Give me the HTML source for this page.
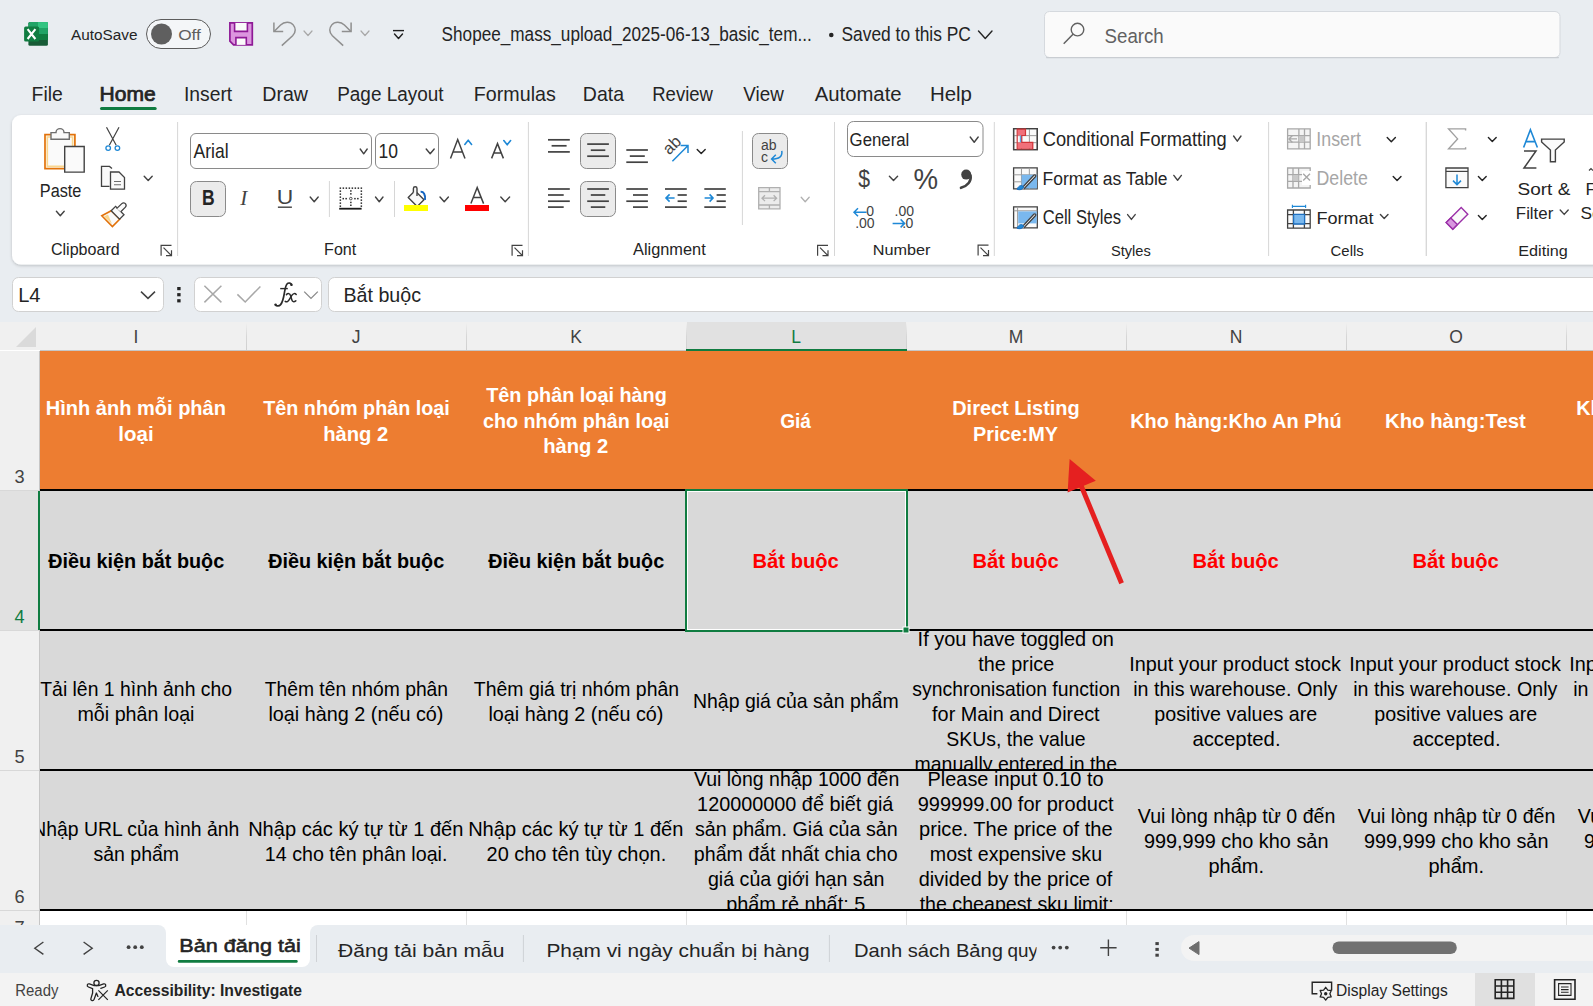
<!DOCTYPE html>
<html><head><meta charset="utf-8"><title>Excel</title>
<style>html,body{margin:0;padding:0;width:1593px;height:1006px;overflow:hidden;background:#e9edf1;}
svg{display:block;font-family:"Liberation Sans", sans-serif;}</style></head>
<body><svg width="1593" height="1006" viewBox="0 0 1593 1006"><rect x="0" y="0" width="1593" height="1006" fill="#e9edf1" /><defs><filter id="sh" x="-5%" y="-20%" width="110%" height="140%"><feDropShadow dx="0" dy="1.2" stdDeviation="1.8" flood-color="#000" flood-opacity="0.2"/></filter><clipPath id="gridclip"><rect x="40" y="351" width="1553" height="574"/></clipPath><clipPath id="gridclip2"><rect x="0" y="351" width="40" height="574"/></clipPath><linearGradient id="hsep" x1="0" y1="0" x2="0" y2="1"><stop offset="0" stop-color="#f0f0f0"/><stop offset="0.5" stop-color="#d6d6d6"/><stop offset="1" stop-color="#d0d0d0"/></linearGradient></defs><rect x="12" y="115" width="1620" height="149.6" rx="9" fill="#fff" filter="url(#sh)"/><rect x="28.4" y="22.1" width="19.5" height="23.6" fill="#185c37" rx="1.5"/><rect x="28.4" y="22.1" width="19.5" height="6" fill="#21a366" rx="1.5"/><rect x="38" y="22.1" width="9.9" height="6" fill="#33c481" /><rect x="28.4" y="28" width="19.5" height="6" fill="#21a366" /><rect x="28.4" y="34" width="19.5" height="6" fill="#107c41" /><rect x="24.1" y="26.4" width="15" height="15" fill="#107c41" rx="1.5"/><path d="M27.6 29.2 L35.4 39 M35.4 29.2 L27.6 39" fill="none" stroke="#fff" stroke-width="2.1" /><text transform="translate(71.00,39.70) scale(1.0185,1)" font-size="15.07" font-weight="400" fill="#242424">AutoSave</text><rect x="146.5" y="19.5" width="64" height="29" rx="14.5" fill="#f4f6f8" stroke="#5c5c5c" stroke-width="1"/><circle cx="161.5" cy="34" r="10.5" fill="#5f5f5f"/><text transform="translate(178.20,39.70) scale(1.1458,1)" font-size="15.07" font-weight="400" fill="#5f5f5f">Off</text><path d="M229.9 22.9 H252.3 V44.9 H233.6 L229.9 41.2 Z" fill="#dc96df" stroke="#8e1a96" stroke-width="1.7" /><path d="M234.6 22.9 V31.4 H247.4 V22.9" fill="#fafafa" stroke="#8e1a96" stroke-width="1.6" /><path d="M235.9 44.9 V37.6 H246.3 V44.9" fill="#fafafa" stroke="#8e1a96" stroke-width="1.6" /><path d="M273.9 22.4 V31.6 H283.2" fill="none" stroke="#8f8f8f" stroke-width="1.5" /><path d="M274.3 31.3 L280.6 25 C284.2 21.4 290.2 21.2 293.2 24.9 C296.2 28.6 295.6 32.6 292.6 35.8 L281.8 45.6" fill="none" stroke="#8f8f8f" stroke-width="1.5" /><path d="M304 31 L308.0 35.5 L312 31" fill="none" stroke="#a8a8a8" stroke-width="1.2" stroke-linecap="round" stroke-linejoin="round"/><path d="M351.1 22.4 V31.6 H341.8" fill="none" stroke="#8f8f8f" stroke-width="1.5" /><path d="M350.7 31.3 L344.4 25 C340.8 21.4 334.8 21.2 331.8 24.9 C328.8 28.6 329.4 32.6 332.4 35.8 L343.2 45.6" fill="none" stroke="#8f8f8f" stroke-width="1.5" /><path d="M361 31 L365.0 35.5 L369 31" fill="none" stroke="#a8a8a8" stroke-width="1.2" stroke-linecap="round" stroke-linejoin="round"/><path d="M393 30.6 H404" fill="none" stroke="#1f1f1f" stroke-width="1.4" /><path d="M394.5 34 L398.5 38.5 L402.5 34" fill="none" stroke="#1f1f1f" stroke-width="1.4" stroke-linecap="round" stroke-linejoin="round"/><text transform="translate(441.60,41.00) scale(0.8900,1)" font-size="19.28" font-weight="400" fill="#242424">Shopee_mass_upload_2025-06-13_basic_tem...</text><circle cx="831.3" cy="35" r="2.3" fill="#242424"/><text transform="translate(841.49,41.00) scale(0.9015,1)" font-size="19.28" font-weight="400" fill="#242424">Saved to this PC</text><path d="M978.5 31 L985.25 38.5 L992 31" fill="none" stroke="#242424" stroke-width="1.4" stroke-linecap="round" stroke-linejoin="round"/><rect x="1044.5" y="11.5" width="515.5" height="46" rx="5" fill="#fafafa" stroke="#d5d9de" stroke-width="1"/><rect x="1046" y="57" width="513" height="1.2" fill="#c9cdd2" rx="0.6"/><circle cx="1077.5" cy="29.6" r="6.3" fill="none" stroke="#616161" stroke-width="1.4"/><path d="M1073 34.3 L1063.7 43.8" fill="none" stroke="#616161" stroke-width="1.5" /><text transform="translate(1104.55,42.80) scale(0.9409,1)" font-size="19.86" font-weight="400" fill="#616161">Search</text><text transform="translate(31.56,101.10) scale(0.9632,1)" font-size="20.14" font-weight="400" fill="#242424">File</text><text transform="translate(183.97,101.10) scale(0.9586,1)" font-size="20.14" font-weight="400" fill="#242424">Insert</text><text transform="translate(262.24,101.10) scale(0.9736,1)" font-size="20.14" font-weight="400" fill="#242424">Draw</text><text transform="translate(337.20,101.10) scale(0.9406,1)" font-size="20.14" font-weight="400" fill="#242424">Page Layout</text><text transform="translate(473.84,101.10) scale(0.9767,1)" font-size="20.14" font-weight="400" fill="#242424">Formulas</text><text transform="translate(582.85,101.10) scale(0.9682,1)" font-size="20.14" font-weight="400" fill="#242424">Data</text><text transform="translate(652.23,101.10) scale(0.9193,1)" font-size="20.14" font-weight="400" fill="#242424">Review</text><text transform="translate(743.31,101.10) scale(0.9352,1)" font-size="20.14" font-weight="400" fill="#242424">View</text><text transform="translate(814.70,101.10) scale(1.0082,1)" font-size="20.14" font-weight="400" fill="#242424">Automate</text><text transform="translate(929.88,101.10) scale(1.0154,1)" font-size="20.14" font-weight="400" fill="#242424">Help</text><text transform="translate(99.53,101.10) scale(1.0450,1)" font-size="20.14" font-weight="400" fill="#242424" stroke="#242424" stroke-width="0.75">Home</text><rect x="100" y="107" width="56.7" height="3" fill="#107c41" rx="1.5"/><path d="M45 134.6 H74.9 V168.7 H45 Z" fill="#fafafa" stroke="#e2720a" stroke-width="1.7" /><path d="M47.3 137 H72.6 V166.4 H47.3 Z" fill="none" stroke="#f9d68e" stroke-width="1.6" /><path d="M51 139.3 V132.6 H56 A4 4 0 0 1 64 132.6 H69.3 V139.3 Z" fill="#fafafa" stroke="#6e6e6e" stroke-width="1.4" /><path d="M64.7 146.5 H84.2 V172.1 H64.7 Z" fill="#fafafa" stroke="#424242" stroke-width="1.4" /><text transform="translate(39.81,196.50) scale(0.9211,1)" font-size="17.68" font-weight="400" fill="#242424">Paste</text><path d="M56.4 211.3 L60.3 215.8 L64.2 211.3" fill="none" stroke="#424242" stroke-width="1.4" stroke-linecap="round" stroke-linejoin="round"/><path d="M106.5 127.3 L116.2 145.2 M119 127.3 L109.3 145.2" fill="none" stroke="#424242" stroke-width="1.2" /><circle cx="108.2" cy="148.1" r="2.3" fill="#fff" stroke="#1e88d6" stroke-width="1.3"/><circle cx="117.4" cy="148.1" r="2.3" fill="#fff" stroke="#1e88d6" stroke-width="1.3"/><path d="M109.5 186.4 H101.5 V166.4 H109.5 L112 168.5" fill="#fafafa" stroke="#424242" stroke-width="1.3" /><path d="M110.5 172 H119 L124.5 177.5 V189.2 H110.5 Z" fill="#fafafa" stroke="#424242" stroke-width="1.3" /><path d="M114 181.5 H121 M114 184.8 H121" fill="none" stroke="#6e6e6e" stroke-width="1.1" /><path d="M144.2 176.3 L148.2 180.6 L152.2 176.3" fill="none" stroke="#424242" stroke-width="1.4" stroke-linecap="round" stroke-linejoin="round"/><path d="M101.8 215.8 L111.2 210.8 L119.6 219.2 L112.4 226.6 Z" fill="#fafafa" stroke="#e2720a" stroke-width="1.6" /><path d="M104 216.4 L108 214.4 L112 224 Z" fill="#f9d68e" stroke="none" stroke-width="0" /><path d="M111.2 210.8 L115.6 206.4 L124 214.8 L119.6 219.2 Z" fill="#fafafa" stroke="#424242" stroke-width="1.3" /><path d="M116.6 208.6 L121.8 203.6 C123 202.4 124.8 202.6 125.6 203.8 C126.4 205 126.2 206.4 125.2 207.4 L120.8 211.8" fill="#fafafa" stroke="#424242" stroke-width="1.3" /><text transform="translate(50.88,254.60) scale(1.0277,1)" font-size="15.65" font-weight="400" fill="#242424">Clipboard</text><path d="M161.1 255.7 V245.29999999999998 H171.5" fill="none" stroke="#424242" stroke-width="1.2" /><path d="M163.5 247.7 L171.5 255.7 M171.5 250.2 V255.7 H166.0" fill="none" stroke="#424242" stroke-width="1.2" /><rect x="177.1" y="122" width="1" height="134" fill="#d6d6d6" /><rect x="190.5" y="133.5" width="181" height="35" rx="5.5" fill="#fff" stroke="#8a8a8a" stroke-width="1"/><text transform="translate(193.60,158.10) scale(0.8760,1)" font-size="20.00" font-weight="400" fill="#242424">Arial</text><path d="M360.2 149 L363.7 153.8 L367.2 149" fill="none" stroke="#424242" stroke-width="1.4" stroke-linecap="round" stroke-linejoin="round"/><rect x="375.5" y="133.5" width="63" height="35" rx="5.5" fill="#fff" stroke="#8a8a8a" stroke-width="1"/><text transform="translate(378.49,158.10) scale(0.8750,1)" font-size="20.00" font-weight="400" fill="#242424">10</text><path d="M426.2 149 L430.2 153.8 L434.2 149" fill="none" stroke="#424242" stroke-width="1.4" stroke-linecap="round" stroke-linejoin="round"/><path d="M450.5 158.4 L457.7 139.6 L465 158.4 M453 152 H462.5" fill="none" stroke="#424242" stroke-width="1.5" /><path d="M464.8 144.4 L468.20000000000005 140.2 L471.6 144.4" fill="none" stroke="#1e88d6" stroke-width="1.6" stroke-linecap="round" stroke-linejoin="round"/><path d="M491.6 158.4 L497.5 143.6 L503.4 158.4 M493.6 153 H501.4" fill="none" stroke="#424242" stroke-width="1.5" /><path d="M503.8 140.6 L507.20000000000005 144.8 L510.6 140.6" fill="none" stroke="#1e88d6" stroke-width="1.6" stroke-linecap="round" stroke-linejoin="round"/><rect x="190.5" y="181.5" width="35" height="35" rx="6" fill="#ebebeb" stroke="#8a8a8a" stroke-width="1"/><text transform="translate(202.05,204.70) scale(0.8231,1)" font-size="21.30" font-weight="700" fill="#242424">B</text><text transform="translate(240.2,204.7) scale(1,1)" font-family="Liberation Serif" font-style="italic" font-size="21" fill="#424242">I</text><text transform="translate(276.84,204.40) scale(1.1017,1)" font-size="20.72" font-weight="400" fill="#424242">U</text><rect x="277.9" y="206.5" width="14" height="1.4" fill="#424242" /><path d="M310.2 197 L314.2 201.8 L318.2 197" fill="none" stroke="#424242" stroke-width="1.4" stroke-linecap="round" stroke-linejoin="round"/><rect x="328.9" y="181" width="1" height="36" fill="#d6d6d6" /><g fill="#2a2a2a"><rect x="339.6" y="187.4" width="1.5" height="1.5"/><rect x="342.6" y="187.4" width="1.5" height="1.5"/><rect x="345.6" y="187.4" width="1.5" height="1.5"/><rect x="348.6" y="187.4" width="1.5" height="1.5"/><rect x="351.6" y="187.4" width="1.5" height="1.5"/><rect x="354.6" y="187.4" width="1.5" height="1.5"/><rect x="357.6" y="187.4" width="1.5" height="1.5"/><rect x="360.6" y="187.4" width="1.5" height="1.5"/><rect x="339.6" y="190.4" width="1.5" height="1.5"/><rect x="360.6" y="190.4" width="1.5" height="1.5"/><rect x="339.6" y="193.4" width="1.5" height="1.5"/><rect x="360.6" y="193.4" width="1.5" height="1.5"/><rect x="339.6" y="196.4" width="1.5" height="1.5"/><rect x="360.6" y="196.4" width="1.5" height="1.5"/><rect x="339.6" y="199.4" width="1.5" height="1.5"/><rect x="360.6" y="199.4" width="1.5" height="1.5"/><rect x="339.6" y="202.4" width="1.5" height="1.5"/><rect x="360.6" y="202.4" width="1.5" height="1.5"/><rect x="339.6" y="205.4" width="1.5" height="1.5"/><rect x="360.6" y="205.4" width="1.5" height="1.5"/><rect x="350.1" y="190.2" width="1.5" height="1.5"/><rect x="350.1" y="193.1" width="1.5" height="1.5"/><rect x="350.1" y="201.7" width="1.5" height="1.5"/><rect x="350.1" y="204.5" width="1.5" height="1.5"/><rect x="342.5" y="197.9" width="1.5" height="1.5"/><rect x="345.4" y="197.9" width="1.5" height="1.5"/><rect x="354.2" y="197.9" width="1.5" height="1.5"/><rect x="357.1" y="197.9" width="1.5" height="1.5"/></g><circle cx="350.8" cy="198.6" r="1.3" fill="none" stroke="#2a2a2a" stroke-width="0.8"/><rect x="339.2" y="207.8" width="22.4" height="1.8" fill="#1a1a1a" /><path d="M375.5 197 L379.25 201.8 L383 197" fill="none" stroke="#424242" stroke-width="1.4" stroke-linecap="round" stroke-linejoin="round"/><rect x="394.0" y="181" width="1" height="36" fill="#d6d6d6" /><path d="M408.2 197.6 L415 190.8 L424 199.8 L417.2 206.6 Z" fill="#fafafa" stroke="#424242" stroke-width="1.4" stroke-linejoin="round"/><path d="M413.4 192.4 V188.4 C413.4 186.2 417 186.2 417 188.4 V196" fill="#fafafa" stroke="#424242" stroke-width="1.4" /><path d="M420.6 191.8 C423.6 191.6 425.6 194.6 425 199.8" fill="none" stroke="#1565c0" stroke-width="2" /><rect x="404" y="205" width="24" height="6" fill="#ffff00" /><path d="M440 197 L444.2 201.8 L448.4 197" fill="none" stroke="#424242" stroke-width="1.4" stroke-linecap="round" stroke-linejoin="round"/><path d="M470.9 203.6 L477.2 187.6 L483.6 203.6 M473.3 197.6 H481.1" fill="none" stroke="#424242" stroke-width="1.5" /><rect x="465" y="205" width="24" height="6" fill="#ff0000" /><path d="M500.8 197 L505.20000000000005 201.8 L509.6 197" fill="none" stroke="#424242" stroke-width="1.4" stroke-linecap="round" stroke-linejoin="round"/><text transform="translate(324.07,254.80) scale(1.0268,1)" font-size="15.65" font-weight="400" fill="#242424">Font</text><path d="M512.1 255.7 V245.29999999999998 H522.5" fill="none" stroke="#424242" stroke-width="1.2" /><path d="M514.5 247.7 L522.5 255.7 M522.5 250.2 V255.7 H517.0" fill="none" stroke="#424242" stroke-width="1.2" /><rect x="527.9" y="122" width="1" height="134" fill="#d6d6d6" /><rect x="548" y="138.95000000000002" width="21.799999999999955" height="1.7" fill="#424242" /><rect x="551.6" y="144.95000000000002" width="15.0" height="1.7" fill="#424242" /><rect x="548" y="151.05" width="21.799999999999955" height="1.7" fill="#424242" /><rect x="580.5" y="133.5" width="35" height="35" rx="6" fill="#ebebeb" stroke="#8a8a8a" stroke-width="1"/><rect x="587.2" y="143.25" width="21.699999999999932" height="1.7" fill="#424242" /><rect x="590.8" y="149.35" width="14.5" height="1.7" fill="#424242" /><rect x="587.2" y="155.35" width="21.699999999999932" height="1.7" fill="#424242" /><rect x="626.3" y="149.15" width="21.600000000000023" height="1.7" fill="#424242" /><rect x="629.8" y="155.25" width="15.0" height="1.7" fill="#424242" /><rect x="626.3" y="161.35" width="21.600000000000023" height="1.7" fill="#424242" /><text transform="translate(669.2,155.6) rotate(-45)" font-size="16.5" fill="#424242">ab</text><path d="M672.4 161.2 L687.6 146 M680.6 145.6 H688 V153" fill="none" stroke="#1e88d6" stroke-width="1.5" /><path d="M697.2 149.4 L701.2 153.6 L705.2 149.4" fill="none" stroke="#242424" stroke-width="1.4" stroke-linecap="round" stroke-linejoin="round"/><rect x="548" y="188.15" width="21.799999999999955" height="1.7" fill="#424242" /><rect x="548" y="194.15" width="15.700000000000045" height="1.7" fill="#424242" /><rect x="548" y="200.35" width="21.799999999999955" height="1.7" fill="#424242" /><rect x="548" y="206.25" width="15.700000000000045" height="1.7" fill="#424242" /><rect x="580.5" y="181.5" width="35" height="35" rx="6" fill="#ebebeb" stroke="#8a8a8a" stroke-width="1"/><rect x="587.2" y="188.15" width="21.699999999999932" height="1.7" fill="#424242" /><rect x="590.8" y="194.15" width="14.5" height="1.7" fill="#424242" /><rect x="587.2" y="200.35" width="21.699999999999932" height="1.7" fill="#424242" /><rect x="590.8" y="206.25" width="14.5" height="1.7" fill="#424242" /><rect x="626.3" y="188.15" width="21.600000000000023" height="1.7" fill="#424242" /><rect x="633" y="194.15" width="14.899999999999977" height="1.7" fill="#424242" /><rect x="626.3" y="200.35" width="21.600000000000023" height="1.7" fill="#424242" /><rect x="633" y="206.25" width="14.899999999999977" height="1.7" fill="#424242" /><rect x="665" y="188.15" width="21.799999999999955" height="1.7" fill="#424242" /><rect x="677.6" y="194.15" width="9.199999999999932" height="1.7" fill="#424242" /><rect x="677.6" y="200.35" width="9.199999999999932" height="1.7" fill="#424242" /><rect x="665" y="206.25" width="21.799999999999955" height="1.7" fill="#424242" /><path d="M674.6 198 H666 M669.6 194.4 L666 198 L669.6 201.6" fill="none" stroke="#1e88d6" stroke-width="1.6" /><rect x="704.3" y="188.15" width="21.5" height="1.7" fill="#424242" /><rect x="716.6" y="194.15" width="9.199999999999932" height="1.7" fill="#424242" /><rect x="716.6" y="200.35" width="9.199999999999932" height="1.7" fill="#424242" /><rect x="704.3" y="206.25" width="21.5" height="1.7" fill="#424242" /><path d="M704.6 198 H713 M709.6 194.4 L713 198 L709.6 201.6" fill="none" stroke="#1e88d6" stroke-width="1.6" /><rect x="741.9" y="131" width="1" height="94" fill="#d6d6d6" /><rect x="752.5" y="133.5" width="35" height="35" rx="6" fill="#ebebeb" stroke="#8a8a8a" stroke-width="1"/><text x="761" y="150.4" font-size="14" fill="#424242">ab</text><text x="761" y="161.8" font-size="14" fill="#424242">c</text><path d="M781.8 150.8 C782.6 156.6 779.2 159 771.8 159 M775.8 154.8 L771.6 159 L775.8 163.2" fill="none" stroke="#1e88d6" stroke-width="1.5" /><path d="M758.7 187.7 H780 V208.8 H758.7 Z M758.7 191.6 H780 M758.7 205 H780 M769.4 187.7 V191.6 M769.4 205 V208.8" fill="#ececec" stroke="#b0b0b0" stroke-width="1.3" /><path d="M762 198.2 H776.6 M765 195.3 L762 198.2 L765 201.1 M773.6 195.3 L776.6 198.2 L773.6 201.1" fill="none" stroke="#b0b0b0" stroke-width="1.3" /><path d="M801.2 197.2 L805.2 201.8 L809.2 197.2" fill="none" stroke="#b0b0b0" stroke-width="1.3" stroke-linecap="round" stroke-linejoin="round"/><text transform="translate(633.00,254.60) scale(1.0448,1)" font-size="15.65" font-weight="400" fill="#242424">Alignment</text><path d="M817.6 255.7 V245.29999999999998 H828" fill="none" stroke="#424242" stroke-width="1.2" /><path d="M820 247.7 L828 255.7 M828 250.2 V255.7 H822.5" fill="none" stroke="#424242" stroke-width="1.2" /><rect x="834.0" y="122" width="1" height="134" fill="#d6d6d6" /><rect x="847.5" y="121.5" width="135.5" height="35" rx="6" fill="#fff" stroke="#8a8a8a" stroke-width="1"/><text transform="translate(849.60,146.00) scale(0.8840,1)" font-size="18.99" font-weight="400" fill="#242424">General</text><path d="M970.2 137 L974.2 142.2 L978.2 137" fill="none" stroke="#424242" stroke-width="1.4" stroke-linecap="round" stroke-linejoin="round"/><text transform="translate(858.34,187.30) scale(0.8819,1)" font-size="24.06" font-weight="400" fill="#424242">$</text><path d="M889.4 176.2 L893.5 180.6 L897.6 176.2" fill="none" stroke="#424242" stroke-width="1.4" stroke-linecap="round" stroke-linejoin="round"/><text transform="translate(913.58,188.80) scale(0.9262,1)" font-size="29.86" font-weight="400" fill="#424242">%</text><circle cx="966.2" cy="174.6" r="5" fill="#424242"/><path d="M970.6 175.6 C971.4 181.5 967.4 186 961 187.8" fill="none" stroke="#424242" stroke-width="2.6" stroke-linecap="round"/><g font-size="14" fill="#424242"><text x="866.2" y="216.2">0</text><text x="855.2" y="227.6">.00</text><text x="894.6" y="216.2">.00</text><text x="905.4" y="227.6">0</text><text x="902.2" y="227.6">.</text></g><path d="M866.6 212.2 H854.2 M858 208.2 L854 212.2 L858 216.2" fill="none" stroke="#1e88d6" stroke-width="1.5" /><path d="M892.6 223.4 H904.4 M900.6 219.4 L904.6 223.4 L900.6 227.4" fill="none" stroke="#1e88d6" stroke-width="1.5" /><text transform="translate(872.72,254.90) scale(1.0684,1)" font-size="15.22" font-weight="400" fill="#242424">Number</text><path d="M978.1 255.6 V245.2 H988.5" fill="none" stroke="#424242" stroke-width="1.2" /><path d="M980.5 247.6 L988.5 255.6 M988.5 250.1 V255.6 H983.0" fill="none" stroke="#424242" stroke-width="1.2" /><rect x="993.8" y="122" width="1" height="134" fill="#d6d6d6" /><path d="M1013.6 128.6 H1037.3 V149.7 H1013.6 Z" fill="#fafafa" stroke="#424242" stroke-width="1.3" /><path d="M1013.6 135.63 H1037.3 M1013.6 142.67 H1037.3 M1021.50 128.6 V149.7 M1029.40 128.6 V149.7" fill="none" stroke="#9a9a9a" stroke-width="1" /><rect x="1017.6" y="129.2" width="8" height="6.3" fill="#f0707a" /><rect x="1017.6" y="142.4" width="15.4" height="6.3" fill="#f0707a" /><rect x="1019.8" y="135.6" width="2.2" height="6.6" fill="#5aa9e6" /><path d="M1013.6 128.6 H1037.3 V149.7 H1013.6 Z" fill="none" stroke="#424242" stroke-width="1.3" /><path d="M1017.2 129.2 H1025.5 V135.5 H1021.8 V142.3 H1032.8 V149 H1017.2 Z" fill="none" stroke="#d13438" stroke-width="1.2" /><text transform="translate(1042.68,146.30) scale(0.9212,1)" font-size="19.86" font-weight="400" fill="#242424">Conditional Formatting</text><path d="M1233.6 136 L1237.3 141.2 L1241 136" fill="none" stroke="#424242" stroke-width="1.4" stroke-linecap="round" stroke-linejoin="round"/><path d="M1013.6 167.8 H1037.2 V188.8 H1013.6 Z" fill="#fafafa" stroke="#424242" stroke-width="1.3" /><path d="M1013.6 174.80 H1037.2 M1013.6 181.80 H1037.2 M1021.47 167.8 V188.8 M1029.33 167.8 V188.8" fill="none" stroke="#9a9a9a" stroke-width="1" /><rect x="1021.6" y="174.8" width="15.4" height="13.6" fill="#7ab8ee" /><path d="M1022 188 L1033.8 175.2 C1035 174 1036.6 175.6 1035.4 176.8 L1023.8 189" fill="#fafafa" stroke="#424242" stroke-width="1.3" /><path d="M1017 189.2 C1019 185 1022 184.6 1023.6 187 C1022.8 189.6 1019.6 190.4 1017 189.2 Z" fill="#1e88d6" stroke="#1e6fc0" stroke-width="1" /><text transform="translate(1042.61,185.00) scale(0.9281,1)" font-size="18.84" font-weight="400" fill="#242424">Format as Table</text><path d="M1173.8 175.4 L1177.6 180.2 L1181.4 175.4" fill="none" stroke="#424242" stroke-width="1.4" stroke-linecap="round" stroke-linejoin="round"/><path d="M1013.6 206.8 H1037.3 V227.9 H1013.6 Z" fill="#fafafa" stroke="#424242" stroke-width="1.3" /><path d="M1013.6 210.8 H1037.3 M1017.6 206.8 V227.9" fill="none" stroke="#9a9a9a" stroke-width="1" /><rect x="1018.2" y="211.4" width="18.5" height="12" fill="#7ab8ee" /><path d="M1022 227 L1033.8 214.2 C1035 213 1036.6 214.6 1035.4 215.8 L1023.8 228" fill="#fafafa" stroke="#424242" stroke-width="1.3" /><path d="M1017 228.2 C1019 224 1022 223.6 1023.6 226 C1022.8 228.6 1019.6 229.4 1017 228.2 Z" fill="#1e88d6" stroke="#1e6fc0" stroke-width="1" /><text transform="translate(1042.75,223.60) scale(0.8543,1)" font-size="19.42" font-weight="400" fill="#242424">Cell Styles</text><path d="M1127.6 214.6 L1131.4 219.4 L1135.2 214.6" fill="none" stroke="#424242" stroke-width="1.4" stroke-linecap="round" stroke-linejoin="round"/><text transform="translate(1110.93,255.60) scale(0.9627,1)" font-size="15.22" font-weight="400" fill="#242424">Styles</text><rect x="1268.1" y="122" width="1" height="134" fill="#d6d6d6" /><path d="M1287.6 128.9 H1310.2 V148.9 H1287.6 Z M1287.6 135.6 H1310.2 M1287.6 142.2 H1310.2 M1298.9 128.9 V148.9 M1304.5 128.9 V148.9" fill="#f4f4f4" stroke="#a8a8a8" stroke-width="1.3" /><rect x="1299.4" y="135.9" width="5" height="6" fill="#c8c8c8" /><path d="M1297 138.9 H1289 M1292.4 135.4 L1289 138.9 L1292.4 142.4" fill="none" stroke="#a8a8a8" stroke-width="1.4" /><text transform="translate(1316.35,146.00) scale(0.9163,1)" font-size="19.42" font-weight="400" fill="#a6a6a6">Insert</text><path d="M1387.2 137.4 L1391.3000000000002 141.8 L1395.4 137.4" fill="none" stroke="#242424" stroke-width="1.4" stroke-linecap="round" stroke-linejoin="round"/><path d="M1287.6 168 H1310.2 V188 H1287.6 Z M1287.6 174.6 H1310.2 M1287.6 181.3 H1310.2 M1293 168 V188 M1298.6 168 V188" fill="#f4f4f4" stroke="#a8a8a8" stroke-width="1.3" /><rect x="1293.4" y="175" width="5" height="6" fill="#c8c8c8" /><rect x="1302" y="171" width="9" height="14" fill="#fff" /><path d="M1303.2 173.8 L1310 180.6 M1310 173.8 L1303.2 180.6" fill="none" stroke="#a8a8a8" stroke-width="1.4" /><text transform="translate(1316.54,184.80) scale(0.9142,1)" font-size="19.42" font-weight="400" fill="#a6a6a6">Delete</text><path d="M1393.2 176.4 L1397.1 180.6 L1401 176.4" fill="none" stroke="#242424" stroke-width="1.4" stroke-linecap="round" stroke-linejoin="round"/><path d="M1287.6 210 H1310.2 V228.2 H1287.6 Z M1287.6 214.6 H1310.2 M1287.6 223.6 H1310.2 M1293.4 210 V228.2 M1304.4 210 V228.2" fill="#fafafa" stroke="#424242" stroke-width="1.3" /><rect x="1293.6" y="214.4" width="11" height="9.6" fill="#7ab8ee" /><path d="M1293.6 214.4 H1304.6 V224 H1293.6 Z" fill="none" stroke="#1e6fc0" stroke-width="1.3" /><path d="M1291.8 206.4 H1306.2 M1292.4 204.8 V208 M1305.6 204.8 V208" fill="none" stroke="#1e88d6" stroke-width="1.1" /><text transform="translate(1316.55,223.60) scale(1.0373,1)" font-size="17.39" font-weight="400" fill="#242424">Format</text><path d="M1380.4 214.4 L1384.2 218.4 L1388 214.4" fill="none" stroke="#424242" stroke-width="1.4" stroke-linecap="round" stroke-linejoin="round"/><text transform="translate(1330.61,255.90) scale(0.9876,1)" font-size="15.07" font-weight="400" fill="#242424">Cells</text><rect x="1425.8" y="122" width="1" height="134" fill="#d6d6d6" /><path d="M1465.6 130.6 V128.9 H1448.6 L1457.6 138.9 L1448.6 148.9 H1465.6 V147.2" fill="none" stroke="#a0a0a0" stroke-width="1.4" /><path d="M1488.4 137.4 L1492.3000000000002 141.6 L1496.2 137.4" fill="none" stroke="#242424" stroke-width="1.4" stroke-linecap="round" stroke-linejoin="round"/><path d="M1445.9 168 H1468 V187.6 H1445.9 Z" fill="#fafafa" stroke="#424242" stroke-width="1.3" /><path d="M1445.9 171.4 H1468" fill="none" stroke="#424242" stroke-width="1.2" /><path d="M1457 174.6 V184.6 M1453 180.6 L1457 184.6 L1461 180.6" fill="none" stroke="#1e88d6" stroke-width="1.5" /><path d="M1478.4 176.4 L1482.3000000000002 180.6 L1486.2 176.4" fill="none" stroke="#242424" stroke-width="1.4" stroke-linecap="round" stroke-linejoin="round"/><path d="M1446.2 222.6 L1461.2 207.6 L1467.8 214.2 L1452.8 229.2 Z" fill="#fafafa" stroke="#9b30a8" stroke-width="1.4" /><path d="M1446.2 222.6 L1450.8 218 L1457.4 224.6 L1452.8 229.2 Z" fill="#d896df" stroke="#9b30a8" stroke-width="1.4" /><path d="M1478.4 215.4 L1482.3000000000002 219.6 L1486.2 215.4" fill="none" stroke="#242424" stroke-width="1.4" stroke-linecap="round" stroke-linejoin="round"/><path d="M1523.6 147.5 L1530.4 129.6 L1537.4 147.5 M1525.8 141.6 H1535.2" fill="none" stroke="#1e88d6" stroke-width="1.6" /><path d="M1524 150.9 H1536 L1524 168 H1536.4" fill="none" stroke="#424242" stroke-width="1.5" /><path d="M1541.6 139.1 H1564.2 V142 L1555.4 150 V161.8 H1550.4 V150 L1541.6 142 Z" fill="#fafafa" stroke="#424242" stroke-width="1.4" /><text transform="translate(1517.52,194.80) scale(1.1028,1)" font-size="17.25" font-weight="400" fill="#242424">Sort &amp;</text><text transform="translate(1515.85,218.70) scale(0.9676,1)" font-size="17.39" font-weight="400" fill="#242424">Filter</text><path d="M1560.2 210 L1564.2 214.4 L1568.2 210" fill="none" stroke="#424242" stroke-width="1.4" stroke-linecap="round" stroke-linejoin="round"/><text x="1585.4" y="194.8" font-size="17.3" fill="#242424">F</text><text x="1580.6" y="218.7" font-size="17.3" fill="#242424">Se</text><path d="M1589 170.5 L1591 168.6 L1593 170.5" fill="none" stroke="#424242" stroke-width="1.2" /><text transform="translate(1518.23,255.90) scale(1.0558,1)" font-size="15.36" font-weight="400" fill="#242424">Editing</text><rect x="1425.8" y="122" width="1" height="134" fill="#d6d6d6" /><rect x="12.5" y="277.5" width="151" height="34" rx="6" fill="#fff" stroke="#d1d1d1" stroke-width="1"/><text transform="translate(18.19,301.90) scale(1.0050,1)" font-size="20.00" font-weight="400" fill="#242424">L4</text><path d="M141 291.6 L148 298.4 L155 291.6" fill="none" stroke="#424242" stroke-width="1.5" /><rect x="177.2" y="287.0" width="3.4" height="3.2" fill="#242424"/><rect x="177.2" y="293.09999999999997" width="3.4" height="3.2" fill="#242424"/><rect x="177.2" y="299.2" width="3.4" height="3.2" fill="#242424"/><rect x="194.5" y="277.5" width="127" height="34" rx="6" fill="#fff" stroke="#d1d1d1" stroke-width="1"/><path d="M204.4 285.8 L221.4 302.4 M221.4 285.8 L204.4 302.4" fill="none" stroke="#a8a8a8" stroke-width="1.5" /><path d="M237.4 294.4 L245.2 302 L260.4 286.4" fill="none" stroke="#a8a8a8" stroke-width="1.5" /><path d="M291.6 285.2 C291.4 283 288.6 282.2 287 284 C285.4 285.8 285 289.6 284.2 294 C283.4 298.6 282.6 302.4 280.6 304.6 C279.2 306.2 276.6 306.4 275.4 305" fill="none" stroke="#2a2a2a" stroke-width="1.7" stroke-linecap="round"/><circle cx="291.4" cy="284.8" r="1.2" fill="#2a2a2a"/><circle cx="275.6" cy="304.6" r="1.2" fill="#2a2a2a"/><path d="M280.2 288.6 H287.8" fill="none" stroke="#2a2a2a" stroke-width="1.4" /><path d="M286.4 294.6 C288 293 289.8 293.2 290.6 295.8 L291.8 299.8 C292.4 301.8 293.8 302.4 295.8 300.8" fill="none" stroke="#2a2a2a" stroke-width="1.5" stroke-linecap="round"/><path d="M296.2 294.4 C295 293 293.2 293.4 291.8 295.4 L289.4 299.4 C288.2 301.6 286.6 302.4 285.2 301.4" fill="none" stroke="#2a2a2a" stroke-width="1.5" stroke-linecap="round"/><path d="M304.2 291.6 L311 298.4 L317.8 291.6" fill="none" stroke="#8a8a8a" stroke-width="1.3" /><rect x="328.5" y="277.5" width="1400" height="34" rx="6" fill="#fff" stroke="#d1d1d1" stroke-width="1"/><text transform="translate(343.48,301.90) scale(1.0121,1)" font-size="19.42" font-weight="400" fill="#242424">Bắt buộc</text><rect x="0" y="322" width="1593" height="603" fill="#fff" /><rect x="0" y="322" width="1593" height="28" fill="#f0f0f0" /><rect x="40" y="350" width="1553" height="1" fill="#c6c6c6" /><rect x="0" y="351" width="39" height="1" fill="#dcdcdc" /><rect x="0" y="351" width="39" height="574" fill="#f0f0f0" /><rect x="39" y="351" width="1" height="574" fill="#c6c6c6" /><path d="M16 347 L36 327 V347 Z" fill="#dadada" stroke="none" stroke-width="0" /><rect x="687" y="322" width="219" height="28" fill="#e1e1e1" /><rect x="246" y="323" width="1" height="27" fill="url(#hsep)" /><rect x="466" y="323" width="1" height="27" fill="url(#hsep)" /><rect x="686" y="323" width="1" height="27" fill="url(#hsep)" /><rect x="906" y="323" width="1" height="27" fill="url(#hsep)" /><rect x="1126" y="323" width="1" height="27" fill="url(#hsep)" /><rect x="1346" y="323" width="1" height="27" fill="url(#hsep)" /><rect x="1566" y="323" width="1" height="27" fill="url(#hsep)" /><rect x="686" y="349" width="221" height="2" fill="#107c41" /><text x="136.0" y="343" text-anchor="middle" font-size="17.5" fill="#424242">I</text><text x="356.0" y="343" text-anchor="middle" font-size="17.5" fill="#424242">J</text><text x="576.0" y="343" text-anchor="middle" font-size="17.5" fill="#424242">K</text><text x="796.0" y="343" text-anchor="middle" font-size="17.5" fill="#107c41">L</text><text x="1016.0" y="343" text-anchor="middle" font-size="17.5" fill="#424242">M</text><text x="1236.0" y="343" text-anchor="middle" font-size="17.5" fill="#424242">N</text><text x="1456.0" y="343" text-anchor="middle" font-size="17.5" fill="#424242">O</text><text x="1676.0" y="343" text-anchor="middle" font-size="17.5" fill="#424242">P</text><rect x="0" y="491" width="38" height="139" fill="#e1e1e1" /><rect x="38" y="491" width="2" height="139" fill="#107c41" /><rect x="0" y="490" width="39" height="1" fill="#d8d8d8" /><text x="19.5" y="483.4" text-anchor="middle" font-size="18.2" fill="#424242" clip-path="url(#gridclip2)">3</text><rect x="0" y="630" width="39" height="1" fill="#d8d8d8" /><text x="19.5" y="623.4" text-anchor="middle" font-size="18.2" fill="#107c41" clip-path="url(#gridclip2)">4</text><rect x="0" y="770" width="39" height="1" fill="#d8d8d8" /><text x="19.5" y="763.4" text-anchor="middle" font-size="18.2" fill="#424242" clip-path="url(#gridclip2)">5</text><rect x="0" y="910" width="39" height="1" fill="#d8d8d8" /><text x="19.5" y="903.4" text-anchor="middle" font-size="18.2" fill="#424242" clip-path="url(#gridclip2)">6</text><rect x="0" y="1051" width="39" height="1" fill="#d8d8d8" /><text x="19.5" y="933.5" text-anchor="middle" font-size="18.2" fill="#424242" clip-path="url(#gridclip2)">7</text><g clip-path="url(#gridclip)"><rect x="40" y="351" width="1553" height="138" fill="#ed7d31" /><rect x="40" y="491" width="1553" height="138" fill="#d9d9d9" /><rect x="40" y="631" width="1553" height="138" fill="#d9d9d9" /><rect x="40" y="771" width="1553" height="138" fill="#d9d9d9" /><rect x="40" y="489" width="1553" height="2" fill="#000" /><rect x="40" y="629" width="1553" height="2" fill="#000" /><rect x="40" y="769" width="1553" height="2" fill="#000" /><rect x="40" y="909" width="1553" height="2" fill="#000" /><rect x="246" y="911" width="1" height="20" fill="#e1e1e1" /><rect x="466" y="911" width="1" height="20" fill="#e1e1e1" /><rect x="686" y="911" width="1" height="20" fill="#e1e1e1" /><rect x="906" y="911" width="1" height="20" fill="#e1e1e1" /><rect x="1126" y="911" width="1" height="20" fill="#e1e1e1" /><rect x="1346" y="911" width="1" height="20" fill="#e1e1e1" /><rect x="1566" y="911" width="1" height="20" fill="#e1e1e1" /><defs><clipPath id="r3"><rect x="40" y="351" width="1553" height="138"/></clipPath><clipPath id="r4"><rect x="40" y="491" width="1553" height="138"/></clipPath><clipPath id="r5"><rect x="40" y="631" width="1553" height="138"/></clipPath><clipPath id="r6"><rect x="40" y="771" width="1553" height="138"/></clipPath></defs><g clip-path="url(#r3)"><text transform="translate(45.80,414.85) scale(1.0017,1)" font-size="20" font-weight="700" fill="#ffffff">Hình ảnh mỗi phân</text><text transform="translate(118.31,440.55) scale(1.0252,1)" font-size="20" font-weight="700" fill="#ffffff">loại</text><text transform="translate(263.30,414.85) scale(0.9877,1)" font-size="20" font-weight="700" fill="#ffffff">Tên nhóm phân loại</text><text transform="translate(323.13,440.55) scale(1.0113,1)" font-size="20" font-weight="700" fill="#ffffff">hàng 2</text><text transform="translate(486.15,402.00) scale(0.9923,1)" font-size="20" font-weight="700" fill="#ffffff">Tên phân loại hàng</text><text transform="translate(482.91,427.70) scale(0.9888,1)" font-size="20" font-weight="700" fill="#ffffff">cho nhóm phân loại</text><text transform="translate(543.13,453.40) scale(1.0113,1)" font-size="20" font-weight="700" fill="#ffffff">hàng 2</text><text transform="translate(780.13,427.70) scale(0.9587,1)" font-size="20" font-weight="700" fill="#ffffff">Giá</text><text transform="translate(952.20,414.85) scale(0.9984,1)" font-size="20" font-weight="700" fill="#ffffff">Direct Listing</text><text transform="translate(973.06,440.55) scale(0.9928,1)" font-size="20" font-weight="700" fill="#ffffff">Price:MY</text><text transform="translate(1130.26,427.70) scale(0.9952,1)" font-size="20" font-weight="700" fill="#ffffff">Kho hàng:Kho An Phú</text><text transform="translate(1385.03,427.70) scale(1.0168,1)" font-size="20" font-weight="700" fill="#ffffff">Kho hàng:Test</text><text transform="translate(1576.21,414.85) scale(0.9900,1)" font-size="20" font-weight="700" fill="#ffffff">Kho hàng:Kho Hà Nộ</text><text transform="translate(1657.98,440.55) scale(0.9900,1)" font-size="20" font-weight="700" fill="#ffffff">Mới</text></g><g clip-path="url(#r4)"><text transform="translate(48.20,567.60) scale(0.9904,1)" font-size="20" font-weight="700" fill="#000">Điều kiện bắt buộc</text><text transform="translate(268.20,567.60) scale(0.9904,1)" font-size="20" font-weight="700" fill="#000">Điều kiện bắt buộc</text><text transform="translate(488.20,567.60) scale(0.9904,1)" font-size="20" font-weight="700" fill="#000">Điều kiện bắt buộc</text><text transform="translate(752.54,567.60) scale(1.0084,1)" font-size="20" font-weight="700" fill="#ff0000">Bắt buộc</text><text transform="translate(972.54,567.60) scale(1.0084,1)" font-size="20" font-weight="700" fill="#ff0000">Bắt buộc</text><text transform="translate(1192.54,567.60) scale(1.0084,1)" font-size="20" font-weight="700" fill="#ff0000">Bắt buộc</text><text transform="translate(1412.54,567.60) scale(1.0084,1)" font-size="20" font-weight="700" fill="#ff0000">Bắt buộc</text><text transform="translate(1632.54,567.60) scale(1.0084,1)" font-size="20" font-weight="700" fill="#ff0000">Bắt buộc</text></g><g clip-path="url(#r5)"><text transform="translate(40.26,695.60) scale(0.9695,1)" font-size="20" font-weight="400" fill="#000">Tải lên 1 hình ảnh cho</text><text transform="translate(77.47,720.60) scale(0.9845,1)" font-size="20" font-weight="400" fill="#000">mỗi phân loại</text><text transform="translate(264.71,695.60) scale(0.9650,1)" font-size="20" font-weight="400" fill="#000">Thêm tên nhóm phân</text><text transform="translate(268.41,720.60) scale(0.9908,1)" font-size="20" font-weight="400" fill="#000">loại hàng 2 (nếu có)</text><text transform="translate(473.81,695.60) scale(0.9718,1)" font-size="20" font-weight="400" fill="#000">Thêm giá trị nhóm phân</text><text transform="translate(488.41,720.60) scale(0.9908,1)" font-size="20" font-weight="400" fill="#000">loại hàng 2 (nếu có)</text><text transform="translate(692.94,708.10) scale(0.9741,1)" font-size="20" font-weight="400" fill="#000">Nhập giá của sản phẩm</text><text transform="translate(917.60,645.60) scale(0.9974,1)" font-size="20" font-weight="400" fill="#000">If you have toggled on</text><text transform="translate(978.35,670.60) scale(0.9894,1)" font-size="20" font-weight="400" fill="#000">the price</text><text transform="translate(912.32,695.60) scale(0.9694,1)" font-size="20" font-weight="400" fill="#000">synchronisation function</text><text transform="translate(932.10,720.60) scale(0.9923,1)" font-size="20" font-weight="400" fill="#000">for Main and Direct</text><text transform="translate(946.27,745.60) scale(0.9725,1)" font-size="20" font-weight="400" fill="#000">SKUs, the value</text><text transform="translate(914.53,770.60) scale(0.9742,1)" font-size="20" font-weight="400" fill="#000">manually entered in the</text><text transform="translate(1129.16,670.60) scale(0.9924,1)" font-size="20" font-weight="400" fill="#000">Input your product stock</text><text transform="translate(1133.22,695.60) scale(0.9826,1)" font-size="20" font-weight="400" fill="#000">in this warehouse. Only</text><text transform="translate(1154.32,720.60) scale(0.9841,1)" font-size="20" font-weight="400" fill="#000">positive values are</text><text transform="translate(1192.39,745.60) scale(1.0178,1)" font-size="20" font-weight="400" fill="#000">accepted.</text><text transform="translate(1349.16,670.60) scale(0.9924,1)" font-size="20" font-weight="400" fill="#000">Input your product stock</text><text transform="translate(1353.22,695.60) scale(0.9826,1)" font-size="20" font-weight="400" fill="#000">in this warehouse. Only</text><text transform="translate(1374.32,720.60) scale(0.9841,1)" font-size="20" font-weight="400" fill="#000">positive values are</text><text transform="translate(1412.39,745.60) scale(1.0178,1)" font-size="20" font-weight="400" fill="#000">accepted.</text><text transform="translate(1569.16,670.60) scale(0.9924,1)" font-size="20" font-weight="400" fill="#000">Input your product stock</text><text transform="translate(1573.22,695.60) scale(0.9826,1)" font-size="20" font-weight="400" fill="#000">in this warehouse. Only</text><text transform="translate(1594.32,720.60) scale(0.9841,1)" font-size="20" font-weight="400" fill="#000">positive values are</text><text transform="translate(1632.39,745.60) scale(1.0178,1)" font-size="20" font-weight="400" fill="#000">accepted.</text></g><g clip-path="url(#r6)"><text transform="translate(32.35,835.60) scale(0.9682,1)" font-size="20" font-weight="400" fill="#000">Nhập URL của hình ảnh</text><text transform="translate(93.41,860.60) scale(0.9767,1)" font-size="20" font-weight="400" fill="#000">sản phẩm</text><text transform="translate(248.14,835.60) scale(1.0038,1)" font-size="20" font-weight="400" fill="#000">Nhập các ký tự từ 1 đến</text><text transform="translate(264.82,860.60) scale(0.9836,1)" font-size="20" font-weight="400" fill="#000">14 cho tên phân loại.</text><text transform="translate(468.14,835.60) scale(1.0038,1)" font-size="20" font-weight="400" fill="#000">Nhập các ký tự từ 1 đến</text><text transform="translate(486.55,860.60) scale(0.9977,1)" font-size="20" font-weight="400" fill="#000">20 cho tên tùy chọn.</text><text transform="translate(693.90,785.60) scale(0.9756,1)" font-size="20" font-weight="400" fill="#000">Vui lòng nhập 1000 đến</text><text transform="translate(697.11,810.60) scale(0.9919,1)" font-size="20" font-weight="400" fill="#000">120000000 để biết giá</text><text transform="translate(694.91,835.60) scale(0.9863,1)" font-size="20" font-weight="400" fill="#000">sản phẩm. Giá của sản</text><text transform="translate(693.83,860.60) scale(0.9806,1)" font-size="20" font-weight="400" fill="#000">phẩm đắt nhất chia cho</text><text transform="translate(707.91,885.60) scale(0.9820,1)" font-size="20" font-weight="400" fill="#000">giá của giới hạn sản</text><text transform="translate(726.16,910.60) scale(0.9935,1)" font-size="20" font-weight="400" fill="#000">phẩm rẻ nhất: 5</text><text transform="translate(927.56,785.60) scale(0.9960,1)" font-size="20" font-weight="400" fill="#000">Please input 0.10 to</text><text transform="translate(917.70,810.60) scale(1.0005,1)" font-size="20" font-weight="400" fill="#000">999999.00 for product</text><text transform="translate(919.10,835.60) scale(1.0021,1)" font-size="20" font-weight="400" fill="#000">price. The price of the</text><text transform="translate(929.82,860.60) scale(0.9815,1)" font-size="20" font-weight="400" fill="#000">most expensive sku</text><text transform="translate(918.80,885.60) scale(0.9948,1)" font-size="20" font-weight="400" fill="#000">divided by the price of</text><text transform="translate(919.66,910.60) scale(0.9816,1)" font-size="20" font-weight="400" fill="#000">the cheapest sku limit:</text><text transform="translate(1137.80,823.10) scale(0.9795,1)" font-size="20" font-weight="400" fill="#000">Vui lòng nhập từ 0 đến</text><text transform="translate(1143.91,848.10) scale(0.9940,1)" font-size="20" font-weight="400" fill="#000">999,999 cho kho sản</text><text transform="translate(1208.50,873.10) scale(1.0000,1)" font-size="20" font-weight="400" fill="#000">phẩm.</text><text transform="translate(1357.80,823.10) scale(0.9795,1)" font-size="20" font-weight="400" fill="#000">Vui lòng nhập từ 0 đến</text><text transform="translate(1363.91,848.10) scale(0.9940,1)" font-size="20" font-weight="400" fill="#000">999,999 cho kho sản</text><text transform="translate(1428.50,873.10) scale(1.0000,1)" font-size="20" font-weight="400" fill="#000">phẩm.</text><text transform="translate(1577.80,823.10) scale(0.9795,1)" font-size="20" font-weight="400" fill="#000">Vui lòng nhập từ 0 đến</text><text transform="translate(1583.91,848.10) scale(0.9940,1)" font-size="20" font-weight="400" fill="#000">999,999 cho kho sản</text><text transform="translate(1648.50,873.10) scale(1.0000,1)" font-size="20" font-weight="400" fill="#000">phẩm.</text></g><rect x="686" y="490" width="221" height="141" fill="none" stroke="#107c41" stroke-width="2"/><rect x="687.5" y="491.5" width="218" height="138" fill="none" stroke="#fff" stroke-width="1"/><rect x="902.5" y="626.5" width="7" height="7" fill="#fff" /><rect x="903.5" y="627.5" width="5" height="5" fill="#107c41" /></g><path d="M1079.6 482 L1121.6 583.2" fill="none" stroke="#e52020" stroke-width="4.9" /><path d="M1069.6 459 L1095.8 480.8 L1067.6 492.4 Z" fill="#e52020"/><rect x="0" y="925" width="1593" height="48" fill="#e9edf1" /><rect x="155" y="925" width="165" height="12" fill="#fff" /><rect x="-20" y="925" width="186" height="60" rx="8" fill="#e9edf1"/><rect x="310" y="925" width="1400" height="60" rx="8" fill="#e9edf1"/><path d="M166 925 H310 V959 A8 8 0 0 1 302 967 H174 A8 8 0 0 1 166 959 Z" fill="#fff"/><path d="M43.4 942 L34.8 948.2 L43.4 954.4" fill="none" stroke="#424242" stroke-width="1.4" /><path d="M83.6 942 L92.2 948.2 L83.6 954.4" fill="none" stroke="#424242" stroke-width="1.4" /><circle cx="128.6" cy="947.2" r="1.9" fill="#424242"/><circle cx="135.2" cy="947.2" r="1.9" fill="#424242"/><circle cx="141.8" cy="947.2" r="1.9" fill="#424242"/><text transform="translate(179.28,952.10) scale(1.1488,1)" font-size="18.84" font-weight="400" fill="#242424" stroke="#242424" stroke-width="0.55">Bản đăng tải</text><rect x="177.8" y="960" width="119.9" height="2.8" fill="#107c41" rx="1.2"/><rect x="316.0" y="935" width="1" height="27" fill="#cfd2d6" /><rect x="522.9" y="935" width="1" height="27" fill="#cfd2d6" /><rect x="828.9" y="935" width="1" height="27" fill="#cfd2d6" /><text transform="translate(338.09,956.70) scale(1.1196,1)" font-size="18.84" font-weight="400" fill="#242424">Đăng tải bản mẫu</text><text transform="translate(546.44,956.70) scale(1.1079,1)" font-size="18.84" font-weight="400" fill="#242424">Phạm vi ngày chuẩn bị hàng</text><defs><clipPath id="tabclip"><rect x="840" y="925" width="196.5" height="48"/></clipPath></defs><g clip-path="url(#tabclip)"><text transform="translate(853.99,957.00) scale(1.0704,1)" font-size="18.84" font-weight="400" fill="#242424">Danh sách Bảng</text><text transform="translate(1007.6,957)" font-size="18.84" fill="#242424">quy</text></g><circle cx="1053.6" cy="947.6" r="1.9" fill="#424242"/><circle cx="1060.2" cy="947.6" r="1.9" fill="#424242"/><circle cx="1066.8" cy="947.6" r="1.9" fill="#424242"/><path d="M1100.2 947.8 H1116.6 M1108.4 939.6 V956" fill="none" stroke="#424242" stroke-width="1.4" /><rect x="1155.4" y="942.1" width="3.4" height="3" fill="#424242"/><rect x="1155.4" y="947.9" width="3.4" height="3" fill="#424242"/><rect x="1155.4" y="953.7" width="3.4" height="3" fill="#424242"/><rect x="1181" y="935" width="440" height="26" rx="13" fill="#f3f3f3"/><path d="M1199 941.6 V954.6 L1189 948.1 Z" fill="#6e6e6e" stroke="#6e6e6e" stroke-width="1" stroke-linejoin="round"/><rect x="1332.5" y="941.5" width="124.3" height="12.5" rx="6.25" fill="#717171"/><rect x="0" y="973" width="1593" height="33" fill="#f3f3f3" /><text transform="translate(15.31,995.90) scale(0.9187,1)" font-size="16.23" font-weight="400" fill="#424242">Ready</text><circle cx="96.5" cy="982.9" r="2.6" fill="none" stroke="#242424" stroke-width="1.3"/><path d="M100.8 988.4 L104.6 987 C106.6 986.2 105.8 983.2 103.6 983.9 L98.8 985.6 H94.2 L89.4 983.9 C87.2 983.2 86.4 986.2 88.4 987 L92.6 988.6 V993 L90.9 998.6 C90.3 1000.8 93.4 1001.4 94.1 999.4 L96.4 993 L97.9 996.4" fill="none" stroke="#242424" stroke-width="1.3" stroke-linejoin="round" stroke-linecap="round"/><path d="M98.4 990.4 L107.8 999.8 M107.8 990.4 L98.4 999.8" fill="none" stroke="#242424" stroke-width="1.2" /><text transform="translate(114.51,995.90) scale(0.9673,1)" font-size="16.23" font-weight="700" fill="#242424">Accessibility: Investigate</text><path d="M1317.4 993.7 H1312.2 V982.2 H1331.6 V990.4" fill="none" stroke="#242424" stroke-width="1.4" /><path d="M1325.70 987.30 L1323.60 990.06 L1320.16 990.50 L1321.50 993.70 L1320.16 996.90 L1323.60 997.34 L1325.70 1000.10 L1327.80 997.34 L1331.24 996.90 L1329.90 993.70 L1331.24 990.50 L1327.80 990.06 Z" fill="#f3f3f3" stroke="#242424" stroke-width="1.3" stroke-linejoin="round"/><circle cx="1325.7" cy="993.7" r="1.7" fill="#242424"/><text transform="translate(1336.10,995.90) scale(0.9283,1)" font-size="16.81" font-weight="400" fill="#242424">Display Settings</text><rect x="1475" y="973" width="60" height="33" fill="#e0e0e0" /><path d="M1495.2 979.8 H1513.8 V998.4 H1495.2 Z M1501.4 979.8 V998.4 M1507.6 979.8 V998.4 M1495.2 986 H1513.8 M1495.2 992.2 H1513.8" fill="none" stroke="#242424" stroke-width="1.6" /><path d="M1554.6 979.8 H1575 V999.2 H1554.6 Z" fill="none" stroke="#242424" stroke-width="1.6" /><path d="M1558.6 983.6 H1571 V995.4 H1558.6 Z M1561 987 H1568.6 M1561 989.6 H1568.6 M1561 992.2 H1568.6" fill="none" stroke="#242424" stroke-width="1.1" /></svg></body></html>
